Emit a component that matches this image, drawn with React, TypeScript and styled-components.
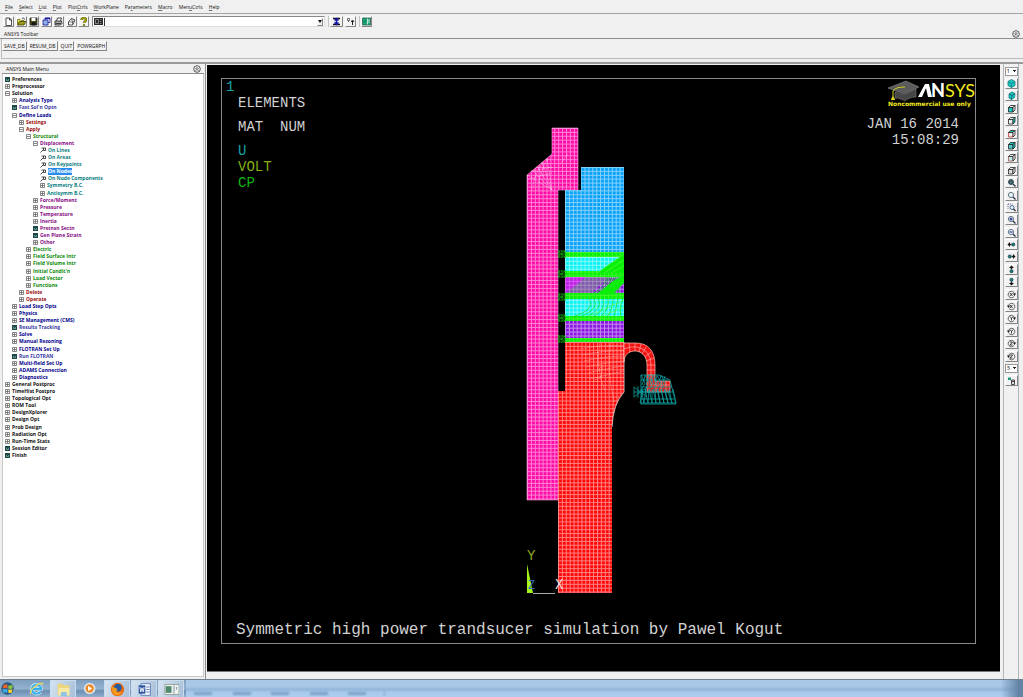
import React from "react";
import styled, { createGlobalStyle, css } from "styled-components";

const GlobalStyle = createGlobalStyle`
  *, *::before, *::after { box-sizing: border-box; }
  body { margin: 0; background: #f0f0f0; }
  button, input, select { font: inherit; color: inherit; margin: 0; }
  u { text-underline-offset: 1px; text-decoration-thickness: 1px; text-decoration-color: #777; }
`;

const ui = '"Open Sans", "Noto Sans", sans-serif';
const mono = '"Liberation Mono", "Courier New", monospace';

const Screen = styled.div`
  display: flex;
  flex-direction: column;
  min-height: 100vh;
  background: #f0f0f0;
  color: #111;
  font: 5px/8px ${ui};
`;

const MenuBar = styled.nav`
  display: flex;
  gap: 6px;
  height: 14px;
  padding: 0 5px;
  align-items: center;
  border-bottom: 1px solid #a4a4a4;
`;

const MenuItem = styled.button`
  padding: 0;
  border: 0;
  background: none;
  line-height: 8px;
`;

const ToolRow = styled.div`
  display: flex;
  align-items: center;
  gap: 3px;
  height: 15px;
  padding: 0 3px;
`;

const FileTools = styled.div`
  display: flex;
  justify-content: space-between;
  width: 86px;
`;

const raised = css`
  background: #f2f2f2;
  border: 1px solid;
  border-color: #fff #858585 #858585 #fff;
`;

const IconButton = styled.button<{ $wide?: boolean }>`
  ${raised}
  display: grid;
  place-items: center;
  width: ${(p) => (p.$wide ? 13 : 11)}px;
  height: 11px;
  padding: 0;
  svg { display: block; }
`;

const CommandBox = styled.div`
  display: flex;
  align-items: center;
  width: 233px;
  height: 11px;
  padding: 1px;
  border: 1px solid;
  border-color: #888 #ddd #ddd #888;
  background: #fff;
`;

const CommandInput = styled.input`
  flex: 1;
  min-width: 0;
  height: 8px;
  padding: 0 1px;
  border: 0;
  border-left: 1px solid #333;
  margin-left: 1px;
  outline: 0;
  background: #fff;
`;

const DropButton = styled.button`
  ${raised}
  display: grid;
  place-items: center;
  width: 6px;
  height: 8px;
  padding: 0;
`;

const Divided = styled.div`
  display: flex;
  gap: 2px;
  padding-left: 1px;
  border-left: 1px solid #c4c4c4;
`;

const PanelTitle = styled.header`
  display: flex;
  align-items: center;
  justify-content: space-between;
  height: 10px;
  padding: 0 3px 0 4px;
  border-bottom: 1px solid #8d8d8d;
`;

const RoundButton = styled.button`
  display: grid;
  place-items: center;
  width: 8px;
  height: 8px;
  padding: 0;
  border: 0;
  background: none;
`;

const Abbreviations = styled.div`
  display: flex;
  align-items: flex-start;
  gap: 1px;
  height: 20px;
  margin: 0 0 3px 1px;
  padding: 2px 0;
  border-left: 1px solid #bbb;
  border-bottom: 1px solid #bbb;
`;

const TextButton = styled.button`
  ${raised}
  height: 10px;
  padding: 0 1px;
  line-height: 8px;
`;

const Workspace = styled.main`
  display: flex;
  flex: 1;
  border-top: 2px solid #9a9a9a;
`;

const Sidebar = styled.aside`
  display: flex;
  flex-direction: column;
  width: 21%;
  max-width: 206px;
  padding: 0 1px 2px 2px;
  border-right: 1px solid #8c8c8c;
`;

const Tree = styled.ul`
  display: grid;
  grid-auto-rows: 1fr;
  height: 383px;
  margin: 0;
  padding: 0;
  list-style: none;
`;

const TreeBody = styled.div`
  flex: 1;
  padding-top: 2px;
  border: 1px solid #c9c9c9;
  border-top: 0;
  background: #fff;
`;

const TreeItem = styled.li<{ $level: number }>`
  display: flex;
  align-items: center;
  gap: 2px;
  min-height: 0;
  padding-left: ${(p) => p.$level * 7 + 2}px;
  color: ${(p) => ["#111", "#00008b", "#9a0a0a", "#0a8a0a", "#860a86", "#0a8080"][p.$level]};
  svg { flex: none; }
`;

const TreeLabel = styled.button<{ $selected?: boolean; $light?: boolean }>`
  height: 7px;
  padding: 0;
  border: 0;
  background: ${(p) => (p.$selected ? "#2a8cf0" : "none")};
  color: ${(p) => (p.$selected ? "#fff" : p.$light ? "#3838a4" : "inherit")};
  font-weight: 700;
  line-height: 7px;
  white-space: nowrap;
`;

const Graphics = styled.section`
  display: flex;
  flex: 1;
  min-width: 0;
  margin: 1px 0 7px 1px;
  padding: 13px 24px 27px 14px;
  background: #000;
  border-bottom: 1px solid #777;
`;

const Frame = styled.div`
  position: relative;
  display: flex;
  flex: 1;
  flex-direction: column;
  justify-content: space-between;
  border: 1px solid #8a8a8a;
  color: #d2d2d2;
  font: 14px/16px ${mono};
  white-space: pre;
`;

const FrameTop = styled.div`
  display: flex;
  justify-content: space-between;
`;

const Legend = styled.div`
  padding-left: 16px;
`;

const LegendLine = styled.div<{ $color?: string; $spaced?: boolean }>`
  color: ${(p) => p.$color || "inherit"};
  margin-bottom: ${(p) => (p.$spaced ? 8 : 0)}px;
`;

const WindowNumber = styled.div`
  padding-left: 4px;
  color: #12a5a5;
`;

const Stamp = styled.div`
  display: flex;
  flex-direction: column;
  align-items: flex-end;
  gap: 8px;
`;

const StampText = styled.time`
  padding-right: 16px;
  text-align: right;
`;

const Caption = styled.div`
  padding: 0 0 5px 14px;
  font-size: 16px;
`;

const Model = styled.svg`
  position: absolute;
  inset: 0;
  width: 100%;
  height: 100%;
`;

const ViewTools = styled.aside`
  width: 16px;
  padding-top: 1px;
  margin: 0 4px 0 3px;
  border: solid #b5b5b5;
  border-width: 0 1px;
`;

const ViewList = styled.div`
  display: grid;
  grid-auto-rows: 1fr;
  place-items: center;
  height: 322px;
`;

const ViewButton = styled(IconButton)`
  width: 13px;
`;

const ViewSelect = styled.select`
  width: 13px;
  height: 9px;
  padding: 0 0 0 1px;
  border: 1px solid #999;
  border-radius: 0;
  appearance: none;
  background:
    linear-gradient(#222, #222) 7px 2px / 3px 1px no-repeat,
    linear-gradient(#222, #222) 8px 3px / 1px 1px no-repeat,
    #fff;
  font-size: 6px;
  line-height: 7px;
`;

const Taskbar = styled.footer`
  display: flex;
  align-items: stretch;
  height: 18px;
  border-top: 1px solid #71808f;
  background: linear-gradient(#a9c8e8 0 35%, #94b6da 55%, #a8caee 75%, #abcdf1);
`;

const TaskIcons = styled.div`
  display: flex;
  gap: 1px;
  padding-right: 2px;
  background: linear-gradient(#7f9fc0, #93b1cf 50%, #6e8fb2 65%, #8eafd0);
`;

const TaskButton = styled.button<{ $open?: boolean }>`
  display: grid;
  place-items: center;
  width: 26px;
  padding: 0;
  border: ${(p) => (p.$open ? "1px solid #c9dcee" : "0")};
  border-bottom: 0;
  background: ${(p) => (p.$open ? "linear-gradient(110deg, #d5e3f1, #a6bfd8)" : "none")};

  &:first-child {
    width: 22px;
    justify-items: start;
  }
`;

const Reflections = styled.svg`
  margin-left: 6px;
`;

const SoftTabs = styled.g`
  fill: #5f84ab;
  opacity: 0.6;
  filter: blur(1px);
`;

const Tray = styled.div`
  width: 22px;
  margin-left: auto;
  background: linear-gradient(90deg, transparent, #6484a6 80%);
`;

/* ---------- small icons ---------- */

const Svg = ({ size = 9, children }: { size?: number; children: React.ReactNode }) => (
  <svg width={size} height={size} viewBox="0 0 18 18" fill="none" stroke="#222" strokeWidth="1.6" aria-hidden="true">
    {children}
  </svg>
);

const CollapseIcon = () => (
  <Svg size={8}>
    <circle cx="9" cy="9" r="7.5" />
    <path d="M5.5 9 9 5.5 12.5 9M5.5 13 9 9.5 12.5 13" />
  </Svg>
);

const fileIcons: [string, React.ReactNode][] = [
  ["New", <path d="M4 2h7l4 4v11H4zM11 2v4h4" fill="#fff" />],
  ["Open", <><path d="M1 15V5h5l2 2h6v2" fill="#e8e04a" stroke="#6b6b10" /><path d="m1 16 4-7h13l-4 7z" fill="#9b9b18" stroke="#44440a" /><path d="M10 3c3-2 5 0 6 2" /></>],
  ["Save", <><path d="M2 2h14v14H2z" fill="#4b4b18" /><path d="M5 2h8v6H5z" fill="#fff" stroke="none" /><path d="M6 11h7v5H6z" fill="#111" /></>],
  ["Report", <><path d="M6 2h10v9H6z" fill="#fff" stroke="#1b1b9a" /><path d="M2 6h10v10H2z" fill="#8fb0e8" stroke="#1b1b9a" /><path d="M6 3h10" stroke="#1b1b9a" strokeWidth="3" /></>],
  ["Print", <><path d="M5 8 7 2h8l-2 6" fill="#fff" /><path d="M2 8h13l1 5-3 3H2z" fill="#aaa" /><path d="M3 13h11" /></>],
  ["Image", <><path d="m3 10 6-7 7 3-5 10H3z" fill="#fff" /><path d="M3 10h8v6M9 3l2 7 5-4" stroke="#555" /></>],
  ["Help", <><path d="M5 6c0-5 9-5 9 0 0 3-4 3-4 6" stroke="#5c5c00" strokeWidth="4.5" /><path d="M5 6c0-5 9-5 9 0 0 3-4 3-4 6" stroke="#d5d500" strokeWidth="2" /><circle cx="10" cy="16" r="1.5" fill="#bebe00" stroke="#5c5c00" /></>],
];

const rightIcons: [string, React.ReactNode][] = [
  ["Raise hidden", <><path d="M2 3h14M2 15h14" stroke="#111" strokeWidth="3" /><path d="M9 4v10M5 7l4-4 4 4M5 11l4 4 4-4" stroke="#1616a8" strokeWidth="3" /></>],
  ["Reset picking", <><path d="M3 3h4v4H3zM5 7v3" stroke="#555" /><path d="M13 16V8M10 10l3-4 3 4" strokeWidth="2" /></>],
  ["Contact manager", <><path d="M1 2h16v14H1z" fill="#19a974" stroke="#2c5a4c" /><path d="M11 3v12M12 6h4M12 10h4" stroke="#eee" /><path d="m3 12 5-6" stroke="#0a5c3c" /></>],
];

const Cube = ({ front, top, side, accent = "#222" }: { front?: string; top?: string; side?: string; accent?: string }) => (
  <Svg size={9}>
    <path d="M3 7h9v9H3z" fill={front || "#eee"} stroke={accent} />
    <path d="m3 7 4-4h9l-4 4z" fill={top || "#eee"} />
    <path d="m12 7 4-4v9l-4 4z" fill={side || "#eee"} />
  </Svg>
);

const Lens = ({ children }: { children?: React.ReactNode }) => (
  <Svg size={9}>
    <circle cx="8" cy="8" r="5.2" fill="#e6f5fa" stroke="#456" />
    <path d="m12 12 5 5" stroke="#234" strokeWidth="2.6" />
    {children}
  </Svg>
);

const Pan = ({ angle }: { angle: number }) => (
  <Svg size={9}>
    <g transform={`rotate(${angle} 9 9)`}>
      <path d="M1 9 6 4v10z" fill="#111" stroke="none" />
      <path d="M5 9h4" strokeWidth="3" />
      <circle cx="12.5" cy="9" r="3" fill="#178a80" stroke="#134" />
    </g>
  </Svg>
);

const Spin = ({ axis, flip }: { axis: string; flip?: boolean }) => (
  <Svg size={9}>
    <g transform={flip ? "translate(18 0) scale(-1 1)" : undefined}>
      <path d="M14 13A6.5 6.5 0 1 1 15 7" stroke="#444" />
      <path d="m12 7 6 0-3 5z" fill="#111" stroke="none" />
    </g>
    <path d={axis === "X" ? "m6 6 5 6M11 6l-5 6" : axis === "Y" ? "m6 5 3 4 3-4M9 9v4" : "M6 6h5l-5 6h5"} stroke="#111" />
  </Svg>
);

const c = "#19c8c0";
const viewIcons: [string, React.ReactNode][] = [
  ["Isometric view", <Svg size={9}><path d="m9 1 7 4v8l-7 4-7-4V5z" fill={c} stroke="#0b7a80" /><path d="m2 5 7 4 7-4M9 9v8" stroke="#0b7a80" /></Svg>],
  ["Oblique view", <Svg size={9}><path d="m4 6 6-4 6 3-1 8-6 4-5-3z" fill={c} stroke="#0b7a80" /><path d="m4 6 6 3 6-4M10 9l-1 8" stroke="#0b5a62" /></Svg>],
  ["Front view", <Cube front={c} />],
  ["Right view", <Cube side={c} />],
  ["Top view", <Cube top={c} accent="#b33" />],
  ["Back view", <Cube top={c} side={c} front="#5cc" />],
  ["Left view", <Cube front="#bdeae8" accent="#a55" />],
  ["Bottom view", <Cube front="#ddd" />],
  ["Fit view", <Lens><circle cx="8" cy="8" r="4" fill="#3a9a98" /><path d="M2 8h12M8 2v12" stroke="#456" /></Lens>],
  ["Zoom model", <Lens />],
  ["Box zoom", <Svg size={9}><path d="M2 2h9M2 2v9" stroke="#338" strokeDasharray="2 2" /><circle cx="10" cy="9" r="4" fill="#dff" stroke="#347" /><path d="m13 12 4 4" strokeWidth="2.5" /></Svg>],
  ["Zoom in", <Lens><path d="M5 8h6M8 5v6" stroke="#118" strokeWidth="2" /></Lens>],
  ["Zoom out", <Lens><path d="M5 8h6" stroke="#118" strokeWidth="2" /></Lens>],
  ["Pan left", <Pan angle={0} />],
  ["Pan right", <Pan angle={180} />],
  ["Pan up", <Pan angle={90} />],
  ["Pan down", <Pan angle={270} />],
  ["Rotate +X", <Spin axis="X" />],
  ["Rotate -X", <Spin axis="X" flip />],
  ["Rotate +Y", <Spin axis="Y" />],
  ["Rotate -Y", <Spin axis="Y" flip />],
  ["Rotate +Z", <Spin axis="Z" />],
  ["Rotate -Z", <Spin axis="Z" flip />],
];

/* ---------- main menu tree ---------- */

type Kind = "+" | "-" | "d" | "p";

const NodeIcon = ({ kind }: { kind: Kind }) => {
  if (kind === "d")
    return (
      <svg width="5" height="5" viewBox="0 0 10 10" aria-hidden="true">
        <path d="M0 0h10v10H0z" fill="#1d4a48" />
        <path d="M2 4h2v1H2zm4 0h2v1H6zM2 7h6v1H2z" fill="#a9cfc6" />
      </svg>
    );
  if (kind === "p")
    return (
      <svg width="6" height="6" viewBox="0 0 12 12" fill="none" stroke="#222" strokeWidth="1.6" aria-hidden="true">
        <path d="M1 11 7 5M3 2h8v5M7 2v5h4" />
      </svg>
    );
  return (
    <svg width="5" height="5" viewBox="0 0 10 10" fill="#fff" stroke="#555" strokeWidth="1.4" aria-hidden="true">
      <path d="M1 1h8v8H1z" />
      <path d={kind === "+" ? "M2 5h6M5 2v6" : "M2 5h6"} />
    </svg>
  );
};

const tree: [number, Kind, string][] = [
  [0, "d", "Preferences"], [0, "+", "Preprocessor"], [0, "-", "Solution"],
  [1, "+", "Analysis Type"], [1, "d", "Fast Sol'n Optn"], [1, "-", "Define Loads"],
  [2, "+", "Settings"], [2, "-", "Apply"], [3, "-", "Structural"], [4, "-", "Displacement"],
  [5, "p", "On Lines"], [5, "p", "On Areas"], [5, "p", "On Keypoints"], [5, "p", "On Nodes"],
  [5, "p", "On Node Components"], [5, "+", "Symmetry B.C."], [5, "+", "Antisymm B.C."],
  [4, "+", "Force/Moment"], [4, "+", "Pressure"], [4, "+", "Temperature"], [4, "+", "Inertia"],
  [4, "d", "Pretnsn Sectn"], [4, "d", "Gen Plane Strain"], [4, "+", "Other"],
  [3, "+", "Electric"], [3, "+", "Field Surface Intr"], [3, "+", "Field Volume Intr"],
  [3, "+", "Initial Condit'n"], [3, "+", "Load Vector"], [3, "+", "Functions"],
  [2, "+", "Delete"], [2, "+", "Operate"], [1, "+", "Load Step Opts"], [1, "+", "Physics"],
  [1, "+", "SE Management (CMS)"], [1, "d", "Results Tracking"], [1, "+", "Solve"],
  [1, "+", "Manual Rezoning"], [1, "+", "FLOTRAN Set Up"], [1, "d", "Run FLOTRAN"],
  [1, "+", "Multi-field Set Up"], [1, "+", "ADAMS Connection"], [1, "+", "Diagnostics"],
  [0, "+", "General Postproc"], [0, "+", "TimeHist Postpro"], [0, "+", "Topological Opt"],
  [0, "+", "ROM Tool"], [0, "+", "DesignXplorer"], [0, "+", "Design Opt"], [0, "+", "Prob Design"],
  [0, "+", "Radiation Opt"], [0, "+", "Run-Time Stats"], [0, "d", "Session Editor"], [0, "d", "Finish"],
];

const menus: [string, number][] = [
  ["File", 0], ["Select", 0], ["List", 0], ["Plot", 0], ["PlotCtrls", 4],
  ["WorkPlane", 0], ["Parameters", 2], ["Macro", 0], ["MenuCtrls", 3], ["Help", 0],
];

/* ---------- finite element model ---------- */

const Mesh = ({ id, fill, x, y, line = "#fff", w = 3.9, h = 3.9, o = 0.5 }: {
  id: string; fill: string; x: number; y: number; line?: string; w?: number; h?: number; o?: number;
}) => (
  <pattern id={id} x={x} y={y} width={w} height={h} patternUnits="userSpaceOnUse">
    <rect width={w} height={h} fill={fill} />
    <path d={`M0 .5H${w}M.5 0V${h}`} stroke={line} strokeOpacity={o} />
  </pattern>
);

const couplings = [255, 275, 298, 319, 340];

const fan = (x: number, y: number, ends: number[][]) => ends.map(([a, b]) => `M${x} ${y}L${a} ${b}`).join("");
const range = (n: number) => Array.from({ length: n }, (_, i) => i);

const ModelPlot = () => (
  <Model viewBox="222 80 753 564" role="img" aria-label="Element plot of the transducer">
    <defs>
      <Mesh id="pink" fill="#ff0aa6" x={527} y={129} />
      <Mesh id="blue" fill="#0aa2f8" x={565} y={168} />
      <Mesh id="aqua" fill="#0af2f2" x={565} y={258} />
      <Mesh id="violet" fill="#8a14e0" x={565} y={278} />
      <Mesh id="red" fill="#ff0808" x={558} y={343} />
      <Mesh id="green" fill="#0af00a" x={565} y={253} line="#8dff5a" o={0.4} />
    </defs>
    <path d="M527 176 552 155V129H578V191H558V501H527Z" fill="url(#pink)" stroke="#ff9adb" strokeWidth=".6" />
    <path
      d={fan(552, 191, [[527, 176], [532, 171], [537, 167], [542, 163], [547, 159]]) +
        "M531 172 552 168M533 190Q532 180 543 163M538 191Q537 181 547 160M528 180 552 174M560 165l8-10"}
      stroke="#fff" strokeOpacity=".4" strokeWidth=".7" fill="none"
    />
    <path d="M581 168H624V254H565V191H581Z" fill="url(#blue)" />
    <path d="M565 257h59v18h-59zM565 299h59v20h-59z" fill="url(#aqua)" />
    <path d="M565 277h59v19h-59zM565 321h59v20h-59z" fill="url(#violet)" />
    <path d="M565 278h21l-21 17z" fill="#ee2af0" opacity=".5" />
    <path d="M586 278h24l-20 17h-25z" fill="#7a9a80" opacity=".5" />
    <path d="M565 253h59v5h-59zM565 272h59v6h-59zM565 294h59v6h-59zM565 317h59v5h-59zM565 339h59v4h-59z" fill="url(#green)" />
    <path d="M597 274 624 255V274ZM597 295 613 282 624 276V284L613 295Z" fill="#0af00a" />
    <path
      d={range(8).map((i) => `M${590 + i * 4} 296Q${604 + i * 2} 290 ${608 + i * 2} 277M${572 + i * 7} 318Q${598 + i * 3} 310 ${588 + i * 5} 299`).join("")}
      stroke="#0ce80c" strokeOpacity=".7" strokeWidth="1" fill="none"
    />
    <path d="M597 274 624 255M604 274 624 261M611 274 624 267M588 318 624 301M600 318 624 308" stroke="#5dff3c" strokeWidth=".6" />
    {couplings.map((y) => (
      <path
        key={y}
        d={`M557 ${y}h10M558 ${y - 3}h8M558 ${y + 3}h8M559 ${y - 4}v8M562 ${y - 4}v8M565 ${y - 4}v8M558 ${y - 3}l7 6M565 ${y - 3}l-7 6`}
        stroke="#0bbd0b" strokeOpacity=".7" strokeWidth=".9"
      />
    ))}
    <path d="M565 343H624V393Q613 405 612 428V594H558V392H565Z" fill="url(#red)" />
    <path d="M624 393Q613 405 612 428M624 343v50" stroke="#ffd8d8" strokeWidth=".8" fill="none" />
    <path
      d={range(6).map((i) => `M${580 + i * 2} ${350 + i * 6}Q${605 + i} ${345 + i * 6} 624 ${347 + i * 5}`).join("") +
        "M597 372 603 366 601 379 594 381M600 343Q595 368 605 392M611 343Q606 368 614 403"}
      stroke="#ffb0a0" strokeOpacity=".65" strokeWidth=".7" fill="none"
    />
    <path d="M624 344H636C649 344 655 353 655 366V382H670V393H647V366C647 357 641 352 635 352C629 352 624 356 624 363Z" fill="#f51414" stroke="#ffc2b8" strokeWidth=".7" />
    <path
      d="M624 350Q630 347 637 348Q651 351 651 366V388M629 344l1 9M635 344v8M641 345l-2 8M646 348l-4 7M651 353l-6 5M654 359l-8 3M655 366h-8M655 371h-8M655 376h-8M651 386h18M656 382v10M661 382v10M666 382v10"
      stroke="#ffd3ca" strokeOpacity=".75" strokeWidth=".7" fill="none"
    />
    <path
      d={"M641 376H659L670 381 676 405H641ZM634 388V398M634 388 647 398M634 398 647 388M638 387v12M634 393H650M641 381H668M641 388H672M641 393H673M641 400H674" +
        range(9).map((i) => `M${643 + i * 3} 390l${i - 3} 14 4 0-3-14`).join("") +
        range(6).map((i) => `M${641 + i * 4} 376l4 8-4 8M${645 + i * 4} 377l-3 9`).join("")}
      stroke="#0aa3a3" strokeWidth=".8" fill="none"
    />
    <path d="M527 565V594H533Z" fill="#a5f51d" />
    <path d="M533 594.5H555" stroke="#aaa" />
    <g fontFamily={mono} fontSize="14">
      <text x="527" y="561" fill="#8aa51c">Y</text>
      <text x="528" y="590" fill="#2768b0" fontSize="12">Z</text>
      <text x="555" y="590" fill="#f2dada">X</text>
    </g>
  </Model>
);

const Logo = () => (
  <svg width="88" height="29" viewBox="0 0 88 29" role="img" aria-label="ANSYS Noncommercial use only">
    <path d="M1 9 19 2 32 8 17 15Z" fill="#5b5b5b" stroke="#888" strokeWidth=".6" />
    <path d="M8 13v6c5 0 8 2 10 3 2-2 6-4 11-4v-8l-12 6z" fill="#454545" stroke="#777" strokeWidth=".6" />
    <path d="M18 8Q8 8 6 12V20" stroke="#d2cf20" fill="none" />
    <path d="m4 20 2-3 2 3v1H4z" fill="#d2cf20" />
    <path d="M31 18 38 5h4l3 13h-4l-2-9-4 9z" fill="#fff" />
    <text x="44" y="18" fontFamily="Lato, sans-serif" fontSize="18" fill="#f2ea1c">
      <tspan fontWeight="900" fill="#fff">N</tspan>SYS
    </text>
    <text x="1" y="27" fontFamily='"DejaVu Sans", sans-serif' fontWeight="700" fontSize="6" fill="#f2ea1c">Noncommercial use only</text>
  </svg>
);

const taskIcons: [string, boolean, React.ReactNode][] = [
  ["Start", false, <><circle cx="9" cy="9" r="8" fill="#28587f" stroke="#9bc" strokeWidth=".8" /><path d="M4 5q3-2 5-.5V9Q6 8 3 9z" fill="#e8622a" /><path d="M10 5q2 1 5-.5V9q-2 1-5 0z" fill="#8cc63e" /><path d="M3 10q3-1 6 0v4q-2-1-5 0z" fill="#3fa9e8" /><path d="M10 10q3 1 5 0l-1 4q-2 1-4 0z" fill="#fbd030" /></>],
  ["Internet Explorer", false, <><path d="M13.500 13A5.500 5.500 0 1 1 14.500 9.500H5" stroke="#e4f6ff" strokeWidth="4" fill="none" /><path d="M13.500 13A5.500 5.500 0 1 1 14.500 9.500H5" stroke="#35aeea" strokeWidth="2.600" fill="none" /><path d="M2 16Q0 11 9 5 18 0 16 5" stroke="#e8d45a" strokeWidth="1.500" fill="none" /></>],
  ["Explorer", true, <><path d="M2 2h6l1 2h7v12H2z" fill="#ecd67a" /><path d="M3 7h13v9H3z" fill="#f6eaa5" /><path d="M6 12h7v5H6z" fill="#8fc4e0" /></>],
  ["Media Player", false, <><circle cx="8" cy="9" r="6" fill="#f08a24" stroke="#dde8f2" strokeWidth="2" /><path d="m6 6 5 3-5 3z" fill="#fff" /></>],
  ["Firefox", true, <><circle cx="9" cy="9" r="8" fill="#e66a12" /><circle cx="9.500" cy="7" r="4.500" fill="#275a9c" /><path d="M2 6q2-1 3 1 3 0 4 2-2 1-1 3 3 2 7-1-2 5-7 5-6-1-6-10z" fill="#f59a1c" /></>],
  ["Word", true, <><path d="M5 2h11v14H5z" fill="#f4f8fd" stroke="#4c6eb0" /><path d="M2 4h8v10H2z" fill="#2c52a0" /><path d="m3.500 6 1 6L6 7l1.500 5 1-6" stroke="#fff" fill="none" /><path d="M11 6h4M11 9h4M11 12h4" stroke="#4c6eb0" /></>],
  ["ANSYS", true, <><path d="M1 3h17v12H1z" fill="#eef2ee" stroke="#8a9a94" /><path d="M2 5h7v8H2z" fill="#4f8a6c" /><path d="M12 4v10M15 6v3" stroke="#789" /></>],
];

const IconBtn = ({ label, children, wide }: { label: string; children: React.ReactNode; wide?: boolean }) => (
  <IconButton aria-label={label} $wide={wide}><Svg>{children}</Svg></IconButton>
);

export default function App() {
  return (
    <Screen>
      <GlobalStyle />
      <MenuBar>
        {menus.map(([name, key]) => (
          <MenuItem key={name}>{name.slice(0, key)}<u>{name[key]}</u>{name.slice(key + 1)}</MenuItem>
        ))}
      </MenuBar>
      <ToolRow>
        <FileTools>
          {fileIcons.map(([label, art]) => <IconBtn key={label} label={label}>{art}</IconBtn>)}
        </FileTools>
        <CommandBox>
          <svg width="9" height="7" viewBox="0 0 18 14" aria-hidden="true">
            <path d="M0 0h18v14H0z" fill="#2c2c2c" />
            <path d="M3 3h6v8H3zM12 3h3M12 7h3M12 11h3" stroke="#ddd" fill="none" />
          </svg>
          <CommandInput aria-label="Command" />
          <DropButton aria-label="Command history">
            <svg width="4" height="3" viewBox="0 0 4 3" aria-hidden="true"><path d="M0 0h4L2 3z" fill="#111" /></svg>
          </DropButton>
        </CommandBox>
        <Divided>
          <IconBtn label={rightIcons[0][0]} wide>{rightIcons[0][1]}</IconBtn>
          <IconBtn label={rightIcons[1][0]}>{rightIcons[1][1]}</IconBtn>
        </Divided>
        <Divided>
          <IconBtn label={rightIcons[2][0]}>{rightIcons[2][1]}</IconBtn>
        </Divided>
      </ToolRow>
      <PanelTitle>
        ANSYS Toolbar
        <RoundButton aria-label="Collapse toolbar"><CollapseIcon /></RoundButton>
      </PanelTitle>
      <Abbreviations>
        {["SAVE_DB", "RESUM_DB", "QUIT", "POWRGRPH"].map((t) => <TextButton key={t}>{t}</TextButton>)}
      </Abbreviations>
      <Workspace>
        <Sidebar>
          <PanelTitle>
            ANSYS Main Menu
            <RoundButton aria-label="Collapse menu"><CollapseIcon /></RoundButton>
          </PanelTitle>
          <TreeBody>
            <Tree>
              {tree.map(([level, kind, label]) => (
                <TreeItem key={label} $level={level}>
                  <NodeIcon kind={kind} />
                  <TreeLabel $selected={label === "On Nodes"} $light={level === 1 && kind === "d"}>{label}</TreeLabel>
                </TreeItem>
              ))}
            </Tree>
          </TreeBody>
        </Sidebar>
        <Graphics>
          <Frame>
            <ModelPlot />
            <FrameTop>
              <div>
                <WindowNumber>1</WindowNumber>
                <Legend>
                  <LegendLine $spaced>ELEMENTS</LegendLine>
                  <LegendLine $spaced>MAT  NUM</LegendLine>
                  <LegendLine $color="#12a5a5">U</LegendLine>
                  <LegendLine $color="#86b012">VOLT</LegendLine>
                  <LegendLine $color="#10b810">CP</LegendLine>
                </Legend>
              </div>
              <Stamp>
                <Logo />
                <StampText>{"JAN 16 2014\n15:08:29"}</StampText>
              </Stamp>
            </FrameTop>
            <Caption>Symmetric high power trandsucer simulation by Pawel Kogut</Caption>
          </Frame>
        </Graphics>
        <ViewTools>
          <ViewList>
            <ViewSelect aria-label="Active window"><option>1</option></ViewSelect>
            {viewIcons.map(([label, art]) => <ViewButton key={label} aria-label={label}>{art}</ViewButton>)}
            <ViewSelect aria-label="Rate"><option>3</option></ViewSelect>
            <ViewButton aria-label="Dynamic mode">
              <Svg size={9}><path d="M2 3h6v5H2z" fill="#1b9a80" stroke="none" /><path d="M9 8h6v9H9zM9 11h6" fill="#ddd" /></Svg>
            </ViewButton>
          </ViewList>
        </ViewTools>
      </Workspace>
      <Taskbar>
        <TaskIcons>
          {taskIcons.map(([label, open, art]) => (
            <TaskButton key={label} aria-label={label} $open={open}>
              <svg width="15" height="15" viewBox="0 0 18 18" aria-hidden="true">{art}</svg>
            </TaskButton>
          ))}
        </TaskIcons>
        <Reflections width="195" height="17" viewBox="0 0 195 17" aria-hidden="true">
          <SoftTabs>
            {[0, 39, 77, 116, 154].map((x) => <rect key={x} x={x + 2} y="12" width="18" height="3" />)}
            <rect x="192" y="11" width="1" height="5" />
          </SoftTabs>
        </Reflections>
        <Tray />
      </Taskbar>
    </Screen>
  );
}
